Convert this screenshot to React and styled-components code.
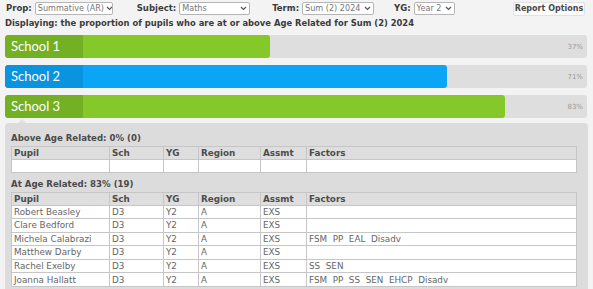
import React from 'react'
import styled, { createGlobalStyle } from 'styled-components'

const GlobalStyle = createGlobalStyle`
    body {
        margin: 0;
        background: #f3f3f3;
        font-family: "DejaVu Sans", Verdana, sans-serif;
        color: #444;
    }
`

const schools = [
    { name: 'School 1', pct: 37, color: '#84c929', dark: '#74b024', end: 270 },
    { name: 'School 2', pct: 71, color: '#0ba5f6', dark: '#0a93de', end: 447 },
    { name: 'School 3', pct: 83, color: '#84c929', dark: '#74b024', end: 505 },
]

const pupils = [
    ['Robert Beasley', 'D3', 'Y2', 'A', 'EXS', ''],
    ['Clare Bedford', 'D3', 'Y2', 'A', 'EXS', ''],
    ['Michela Calabrazi', 'D3', 'Y2', 'A', 'EXS', 'FSM  PP  EAL  Disadv'],
    ['Matthew Darby', 'D3', 'Y2', 'A', 'EXS', ''],
    ['Rachel Exelby', 'D3', 'Y2', 'A', 'EXS', 'SS  SEN'],
    ['Joanna Hallatt', 'D3', 'Y2', 'A', 'EXS', 'FSM  PP  SS  SEN  EHCP  Disadv'],
]

function Chevron() {
    return (
        <svg width="7" height="5" viewBox="0 0 7 5">
            <path d="M1 1l2.5 2.5L6 1" fill="none" stroke="#555" strokeWidth="1.2" />
        </svg>
    )
}

function PupilTable({ rows }) {
    return (
        <Table>
            <colgroup>
                <col style={{ width: 98 }} />
                <col style={{ width: 54 }} />
                <col style={{ width: 35 }} />
                <col style={{ width: 62 }} />
                <col style={{ width: 46 }} />
                <col />
            </colgroup>
            <thead>
                <tr>
                    <th>Pupil</th>
                    <th>Sch</th>
                    <th>YG</th>
                    <th>Region</th>
                    <th>Assmt</th>
                    <th>Factors</th>
                </tr>
            </thead>
            <tbody>
                {rows.length === 0 ? (
                    <tr>
                        <td></td><td></td><td></td><td></td><td></td><td></td>
                    </tr>
                ) : rows.map((r) => (
                    <tr key={r[0]}>
                        {r.map((c, i) => <td key={i}>{c}</td>)}
                    </tr>
                ))}
            </tbody>
        </Table>
    )
}

export default function App() {
    return (
        <Page>
            <GlobalStyle />
            <Toolbar>
                <Field>
                    <Label>Prop:</Label>
                    <Select w={78}>Summative (AR)<Chevron /></Select>
                </Field>
                <Field gap={24}>
                    <Label>Subject:</Label>
                    <Select w={71}>Maths<Chevron /></Select>
                </Field>
                <Field gap={22}>
                    <Label>Term:</Label>
                    <Select w={72}>Sum (2) 2024<Chevron /></Select>
                </Field>
                <Field gap={20}>
                    <Label>YG:</Label>
                    <Select w={41}>Year 2<Chevron /></Select>
                </Field>
                <Button>Report Options</Button>
            </Toolbar>
            <Caption>Displaying: the proportion of pupils who are at or above Age Related for Sum (2) 2024</Caption>
            <Bars>
                {schools.map((s) => (
                    <Track key={s.name}>
                        <Fill color={s.color} style={{ width: s.end - 5 }}>
                            <SchoolName dark={s.dark}>{s.name}</SchoolName>
                        </Fill>
                        <Pct>{s.pct}%</Pct>
                    </Track>
                ))}
            </Bars>
            <Panel>
                <SectionTitle>Above Age Related: 0% (0)</SectionTitle>
                <PupilTable rows={[]} />
                <SectionTitle>At Age Related: 83% (19)</SectionTitle>
                <PupilTable rows={pupils} />
            </Panel>
        </Page>
    )
}

const Page = styled.div`
    width: 593px;
    height: 289px;
    overflow: hidden;
`

const Toolbar = styled.div`
    display: flex;
    align-items: center;
    height: 16px;
    padding: 0 8px 0 6px;
`

const Field = styled.div`
    display: flex;
    align-items: center;
    gap: 3px;
    margin-left: ${(p) => p.gap || 0}px;
`

const Label = styled.span`
    font-size: 8.5px;
    font-weight: bold;
    color: #3c3c3c;
`

const Select = styled.div`
    display: flex;
    align-items: center;
    justify-content: space-between;
    box-sizing: border-box;
    width: ${(p) => p.w}px;
    height: 13px;
    padding: 0 2px;
    background: #fff;
    border: 1px solid #b5b5b5;
    border-radius: 2px;
    font-size: 8.1px;
    color: #777;
    white-space: nowrap;
    overflow: hidden;

    svg {
        flex-shrink: 0;
        margin-left: 2px;
    }
`

const Button = styled.div`
    margin-left: auto;
    box-sizing: border-box;
    width: 72px;
    height: 14px;
    margin-top: 1px;
    background: #fbfbfb;
    border: 1px solid #e2e2e2;
    border-radius: 2px;
    font-size: 8px;
    font-weight: bold;
    color: #4a4a4a;
    text-align: center;
    line-height: 12px;
`

const Caption = styled.div`
    padding: 1px 5px 0;
    height: 13px;
    font-size: 8.4px;
    font-weight: bold;
    color: #3c3c3c;
    line-height: 12px;
`

const Bars = styled.div`
    display: flex;
    flex-direction: column;
    gap: 7px;
    margin-top: 5px;
    padding: 0 6px 0 5px;
`

const Track = styled.div`
    display: flex;
    align-items: center;
    height: 23px;
    background: #dedede;
    border-radius: 3px;
    overflow: hidden;
`

const Fill = styled.div`
    display: flex;
    height: 100%;
    background: ${(p) => p.color};
    border-radius: 3px;
`

const SchoolName = styled.div`
    width: 78px;
    box-sizing: border-box;
    padding-left: 6px;
    background: ${(p) => p.dark};
    color: #fff;
    font-family: Lato, "Open Sans", sans-serif;
    font-size: 13px;
    line-height: 23px;
    border-radius: 3px 0 0 3px;
`

const Pct = styled.span`
    margin-left: auto;
    padding-right: 4px;
    font-size: 7px;
    color: #999;
`

const Panel = styled.div`
    position: relative;
    margin: 5px 5px 0;
    padding: 8px 11px 10px 6px;
    background: #dcdcdc;
    border-radius: 4px;

    &::before {
        content: "";
        position: absolute;
        top: -4px;
        left: 13px;
        border: 4px solid transparent;
        border-top: 0;
        border-bottom-color: #e2e2e2;
    }
`

const SectionTitle = styled.div`
    height: 15px;
    font-size: 8.6px;
    font-weight: bold;
    color: #4a4a4a;
    line-height: 15px;
    margin-top: 4px;

    &:first-child {
        margin-top: 0;
    }
`

const Table = styled.table`
    width: 100%;
    border-collapse: collapse;
    table-layout: fixed;
    font-size: 8.8px;

    th, td {
        height: 12px;
        padding: 0 2px;
        border: 1px solid #c6c6c6;
        text-align: left;
        white-space: pre;
        line-height: 12px;
    }

    tbody tr + tr td {
        height: 12.6px;
    }

    th {
        background: #dedede;
        color: #4d4d4d;
        font-weight: bold;
    }

    td {
        background: #fff;
        color: #666;
    }
`
